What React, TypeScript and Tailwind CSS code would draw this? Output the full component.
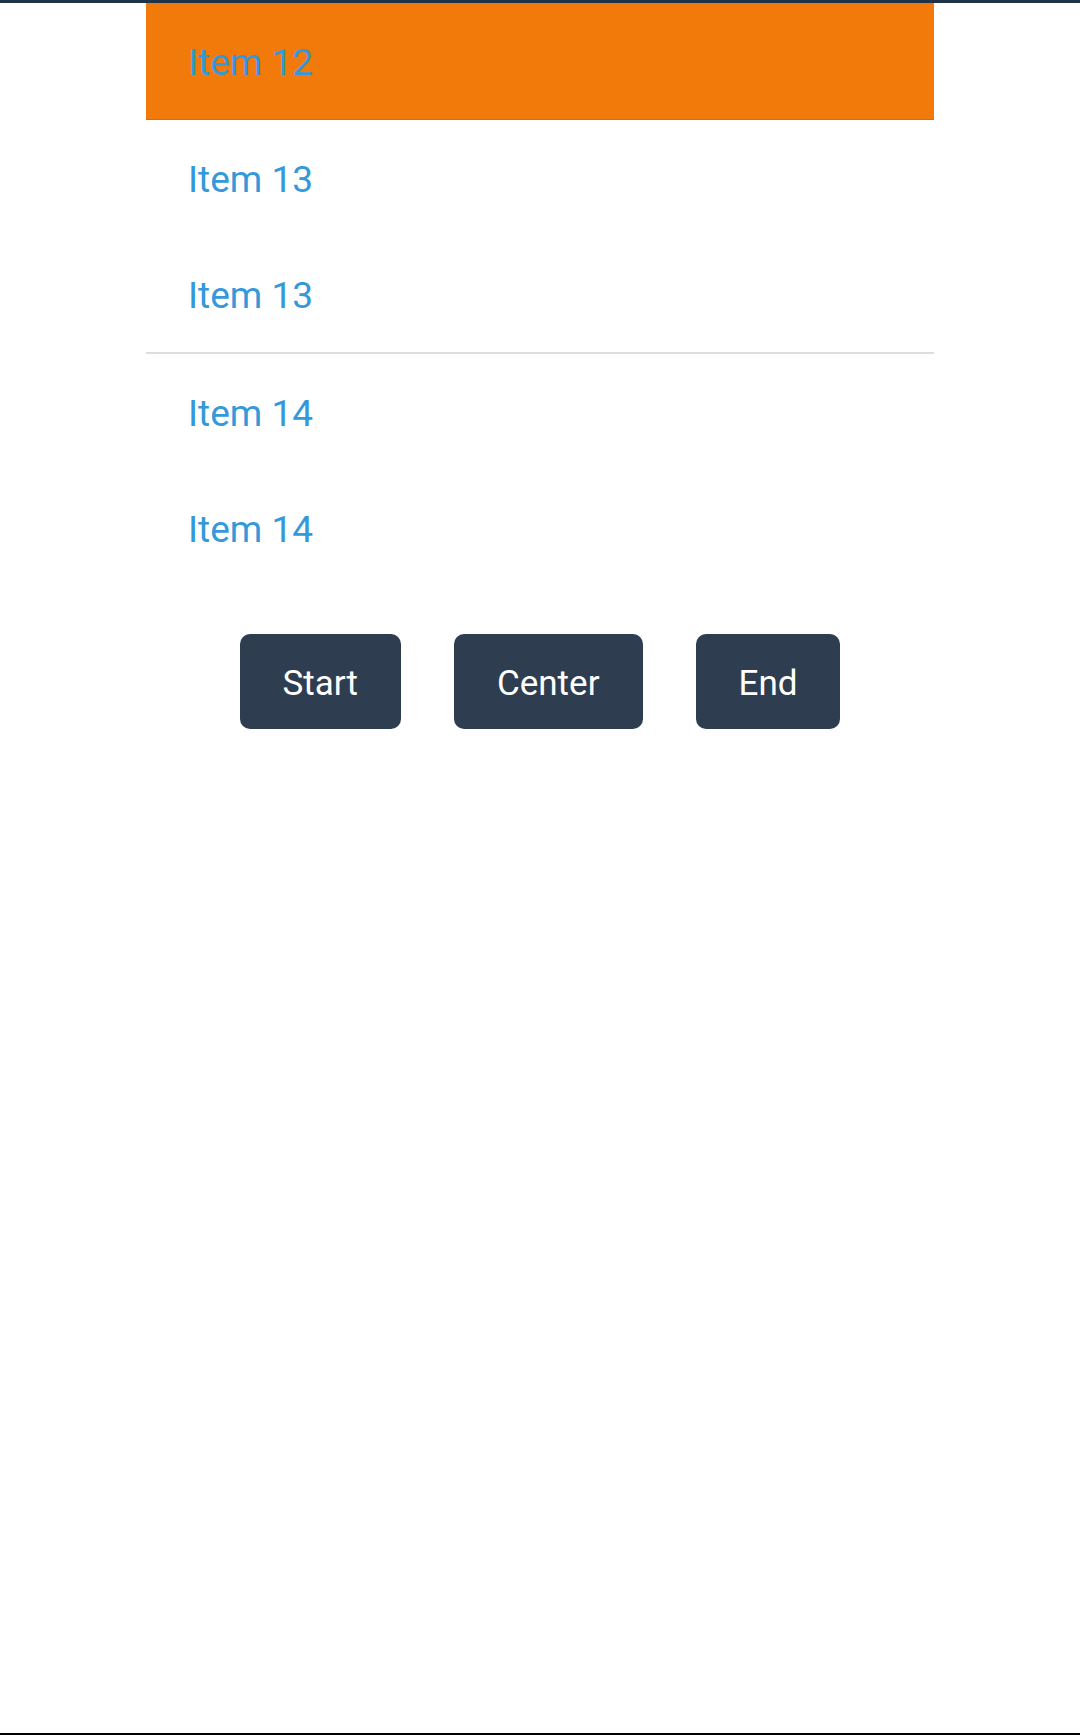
const rows = [
  { label: 'Item 13' },
  { label: 'Item 13' },
];

const rowsAfter = [
  { label: 'Item 14' },
  { label: 'Item 14' },
];

export default function App() {
  return (
    <div className="flex h-[1735px] flex-col bg-white font-['Roboto',sans-serif]">
      <div className="h-[3px] bg-[#1e3348]" />

      <main className="flex-1">
        <div className="mx-auto w-[788px]">
          <div className="flex h-[117px] items-center border-b border-[#d96c08] bg-[#f27a0b] pt-[3px] pl-[42px] text-[37px] text-[#3498db]">
            Item 12
          </div>

          {rows.map((row, i) => (
            <div key={i} className="flex h-[116px] items-center pt-[3px] pl-[42px] text-[37px] text-[#3498db]">
              {row.label}
            </div>
          ))}

          <div className="h-[2px] bg-[#dddddd]" />

          {rowsAfter.map((row, i) => (
            <div key={i} className="flex h-[116px] items-center pt-[3px] pl-[42px] text-[37px] text-[#3498db]">
              {row.label}
            </div>
          ))}

          <div className="mt-[48px] flex justify-center gap-[53px]">
            {['Start', 'Center', 'End'].map((label) => (
              <button
                key={label}
                className="h-[95px] rounded-[10px] bg-[#2e3e50] px-[43px] pt-[6px] text-[35px] text-white"
              >
                {label}
              </button>
            ))}
          </div>
        </div>
      </main>

      <div className="h-[2px] bg-black" />
    </div>
  );
}
